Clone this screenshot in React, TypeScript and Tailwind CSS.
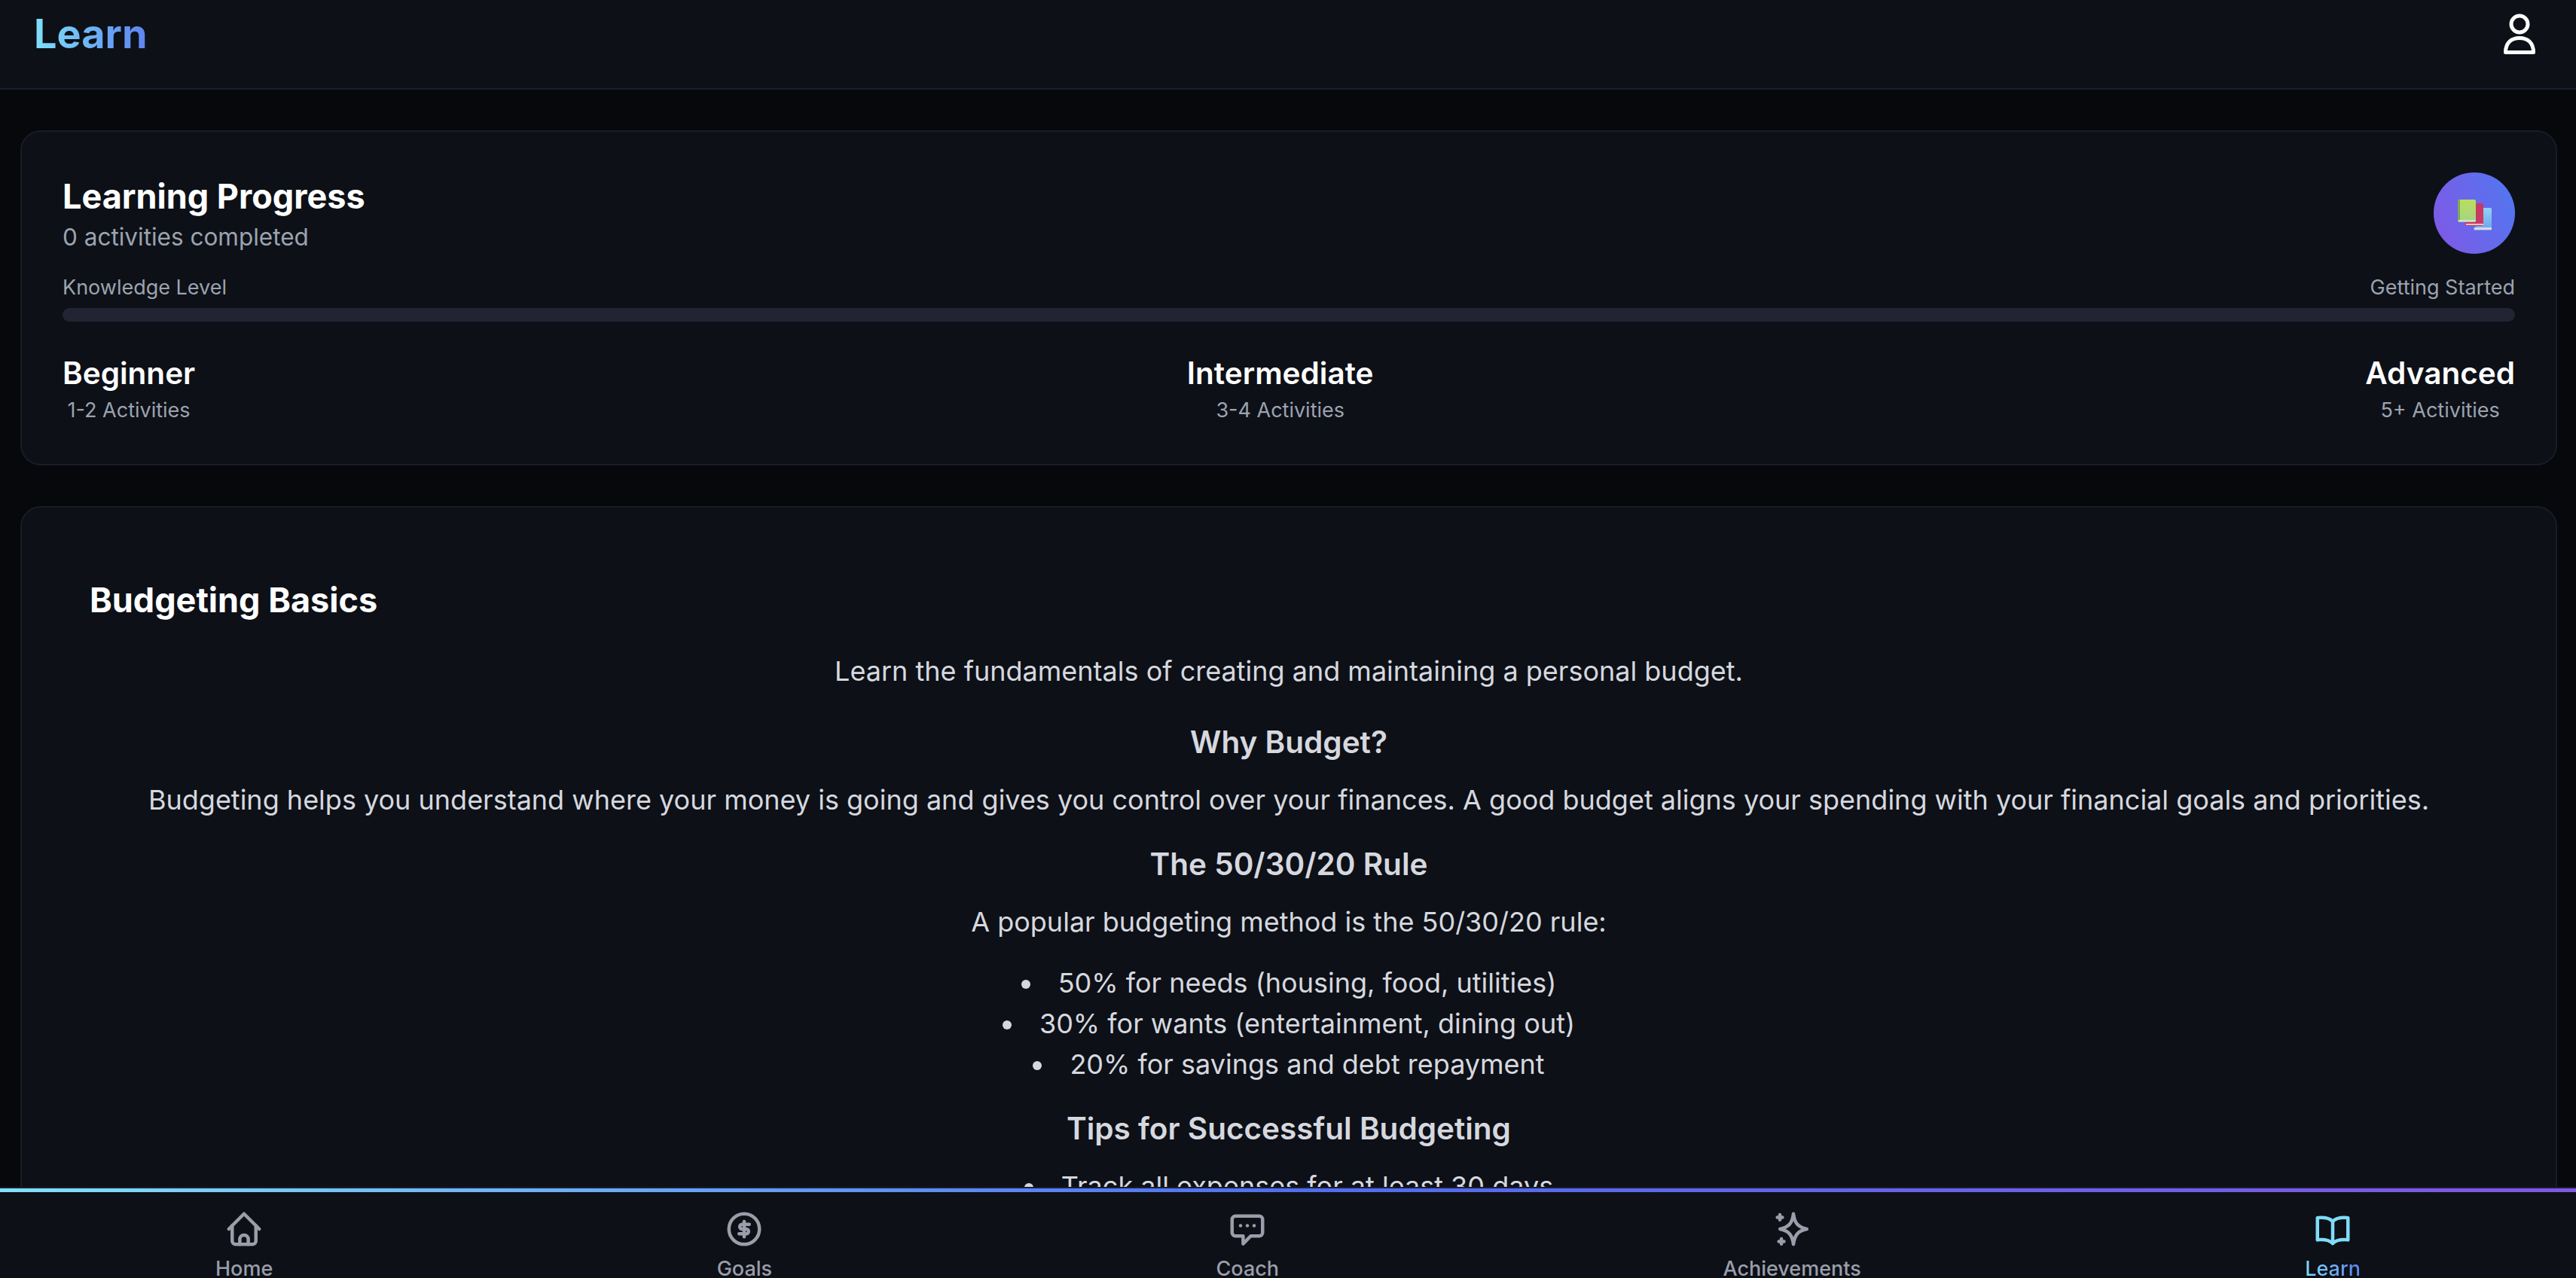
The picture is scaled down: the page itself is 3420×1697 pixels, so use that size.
const levels = [
  { name: 'Beginner', range: '1-2 Activities' },
  { name: 'Intermediate', range: '3-4 Activities' },
  { name: 'Advanced', range: '5+ Activities' },
];

function NavIcon({ name }: { name: string }) {
  return (
    <svg width="54" height="54" viewBox="0 0 24 24" fill="none" stroke="currentColor" strokeWidth="2" strokeLinecap="round" strokeLinejoin="round">
      {name === 'Home' && (
        <>
          <path d="M3 12l9-9 9 9" />
          <path d="M5 10v9a2 2 0 0 0 2 2h10a2 2 0 0 0 2-2v-9" />
          <path d="M9.5 21v-3a2.5 2.5 0 0 1 5 0v3" />
        </>
      )}
      {name === 'Goals' && (
        <>
          <circle cx="12" cy="12" r="9" />
          <path d="M15 9.2h-4.2a1.4 1.4 0 0 0 0 2.8h2.4a1.4 1.4 0 0 1 0 2.8H9" />
          <path d="M12 7.5v9" />
        </>
      )}
      {name === 'Coach' && (
        <>
          <path d="M5 4.3h14a2 2 0 0 1 2 2v7.8a2 2 0 0 1-2 2h-5l-4.5 4.6v-4.6H5a2 2 0 0 1-2-2V6.3a2 2 0 0 1 2-2z" />
          <circle cx="8" cy="10" r="1" fill="currentColor" stroke="none" />
          <circle cx="12" cy="10" r="1" fill="currentColor" stroke="none" />
          <circle cx="16" cy="10" r="1" fill="currentColor" stroke="none" />
        </>
      )}
      {name === 'Achievements' && (
        <>
          <path d="M12.9 3c.7 5.5 2.6 7.9 7.9 9-5.3 1.1-7.2 3.5-7.9 9-.7-5.5-2.6-7.9-7.9-9 5.3-1.1 7.2-3.5 7.9-9z" />
          <path d="M4.9 3.6v3M3.4 5.1h3M5.8 17.8v3M4.3 19.3h3" />
        </>
      )}
      {name === 'Learn' && (
        <>
          <path d="M12 7.5C10.5 5.8 8 5.2 5 5.2c-.8 0-1.4 0-2 .2v13c.6-.2 1.2-.2 2-.2 3 0 5.5.6 7 2.2" />
          <path d="M12 7.5c1.5-1.7 4-2.3 7-2.3.8 0 1.4 0 2 .2v13c-.6-.2-1.2-.2-2-.2-3 0-5.5.6-7 2.2" />
          <path d="M12 7.5v12.9" />
        </>
      )}
    </svg>
  );
}

function Books() {
  return (
    <svg className="mt-[5px]" width="45" height="41" viewBox="0 0 45 41">
      <defs>
        <linearGradient id="blueBook" x1="0" y1="0" x2="0" y2="1">
          <stop offset="0" stopColor="#92d3f6" />
          <stop offset="1" stopColor="#68a5ea" />
        </linearGradient>
        <linearGradient id="greenBook" x1="0" y1="0" x2="0" y2="1">
          <stop offset="0" stopColor="#b9dd62" />
          <stop offset="1" stopColor="#a5d583" />
        </linearGradient>
      </defs>
      <rect x="21" y="11" width="24" height="30" rx="2" fill="url(#blueBook)" />
      <rect x="21" y="11" width="3" height="27" fill="#4f85c8" />
      <rect x="22" y="37" width="23" height="3" fill="#e0d2ea" />
      <rect x="10" y="5" width="24" height="30" rx="2" fill="#c73a63" />
      <rect x="11" y="32" width="23" height="2" fill="#e6c3d3" />
      <rect x="0" y="0" width="24" height="30" rx="2" fill="url(#greenBook)" />
      <rect x="0" y="0" width="3" height="28" fill="#7dab52" />
      <rect x="1" y="27" width="23" height="2" fill="#d8d8e4" />
    </svg>
  );
}

export default function App() {
  return (
    <div className="flex h-[1697px] flex-col overflow-hidden bg-[#07080c] font-['Inter',sans-serif] text-white">
      <header className="flex h-[119px] shrink-0 items-start justify-between border-b-2 border-[#1c1e2b] bg-[#0d1017] pl-[45px] pr-[51px] pt-[9px]">
        <h1 className="bg-gradient-to-r from-[#7fe0fa] to-[#5f82ee] bg-clip-text text-[54px] font-bold leading-[72px] text-transparent">Learn</h1>
        <svg className="mt-[9px]" width="48" height="56" viewBox="0 0 48 56" fill="none" stroke="white" strokeWidth="5">
          <circle cx="24" cy="14" r="11" />
          <path d="M5.5 51.5C5.5 39 13 32.5 24 32.5S42.5 39 42.5 51.5z" strokeLinejoin="round" />
        </svg>
      </header>

      <main className="min-h-0 flex-1 overflow-hidden pl-[27px] pr-[25px] pt-[54px]">
        <section className="rounded-[27px] border-2 border-[#1a1c28] bg-[#0d1017] px-[54px] pb-[53px] pt-[54px]">
          <div className="flex items-start justify-between">
            <div>
              <h2 className="text-[45px] font-bold leading-[63px]">Learning Progress</h2>
              <p className="text-[31.5px] leading-[45px] text-[#9ca3af]">0 activities completed</p>
            </div>
            <div className="flex h-[108px] w-[108px] items-center justify-center rounded-full bg-[linear-gradient(70deg,#8257e5,#4f78f0)]">
              <Books />
            </div>
          </div>
          <div className="mt-[27px] flex justify-between text-[27px] leading-[36px] text-[#9ca3af]">
            <span>Knowledge Level</span>
            <span>Getting Started</span>
          </div>
          <div className="mt-[9px] h-[18px] rounded-full bg-[#222433]" />
          <div className="mt-[37px] flex justify-between">
            {levels.map((level) => (
              <div key={level.name} className="text-center">
                <div className="text-[40.5px] font-semibold leading-[63px]">{level.name}</div>
                <div className="text-[27px] leading-[36px] text-[#9ca3af]">{level.range}</div>
              </div>
            ))}
          </div>
        </section>

        <section className="mt-[54px] rounded-[27px] border-2 border-[#1a1c28] bg-[#0d1017] px-[90px] pb-[90px] pt-[91px] text-center text-[36px] leading-[54px] text-[#d6d8df]">
          <h2 className="text-left text-[45px] font-bold leading-[63px] text-white">Budgeting Basics</h2>
          <p className="mt-[36px]">Learn the fundamentals of creating and maintaining a personal budget.</p>
          <h3 className="mt-[36px] text-[40.5px] font-semibold leading-[63px]">Why Budget?</h3>
          <p className="mt-[18px]">Budgeting helps you understand where your money is going and gives you control over your finances. A good budget aligns your spending with your financial goals and priorities.</p>
          <h3 className="mt-[27px] text-[40.5px] font-semibold leading-[63px]">The 50/30/20 Rule</h3>
          <p className="mt-[18px]">A popular budgeting method is the 50/30/20 rule:</p>
          <ul className="mt-[27px] list-inside list-disc">
            <li>50% for needs (housing, food, utilities)</li>
            <li>30% for wants (entertainment, dining out)</li>
            <li>20% for savings and debt repayment</li>
          </ul>
          <h3 className="mt-[27px] text-[40.5px] font-semibold leading-[63px]">Tips for Successful Budgeting</h3>
          <ul className="mt-[18px] list-inside list-disc">
            <li>Track all expenses for at least 30 days</li>
          </ul>
        </section>
      </main>

      <nav className="h-[121px] shrink-0 overflow-hidden border-t-2 border-[#1c1e2b] bg-[#0d1017]">
        <div className="h-[5px] bg-[linear-gradient(to_right,#81e1fb,#4f6ef0_50%,#8257e5)]" />
        <div className="flex justify-between px-[286px] pt-[22px]">
          {['Home', 'Goals', 'Coach', 'Achievements', 'Learn'].map((label) => (
            <div key={label} className={label === 'Learn' ? 'flex flex-col items-center text-[#7fdcf9]' : 'flex flex-col items-center text-[#9b9eaa]'}>
              <NavIcon name={label} />
              {label === 'Learn' ? (
                <span className="mt-[8px] bg-gradient-to-r from-[#7fdcf9] to-[#5f82ee] bg-clip-text text-[27px] font-medium leading-[36px] text-transparent">{label}</span>
              ) : (
                <span className="mt-[8px] text-[27px] font-medium leading-[36px]">{label}</span>
              )}
            </div>
          ))}
        </div>
      </nav>
    </div>
  );
}
